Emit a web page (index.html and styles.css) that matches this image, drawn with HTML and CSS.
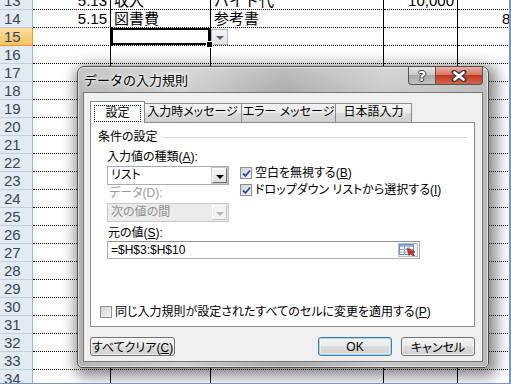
FILE: index.html
```html
<!DOCTYPE html>
<html lang="ja">
<head>
  <meta charset="UTF-8" />
  <title>データの入力規則</title>
  <link rel="stylesheet" href="styles.css">
</head>
<body>
  <div class="window">
    <div class="sheet">
      <div class="row"><div class="rh">13</div><div class="c a num">5.13</div><div class="c b">収入</div><div class="c cc">バイト代</div><div class="c d num">10,000</div><div class="c e"></div></div>
      <div class="row"><div class="rh">14</div><div class="c a num">5.15</div><div class="c b">図書費</div><div class="c cc">参考書</div><div class="c d"></div><div class="c e"><span class="cut">8,000</span></div></div>
      <div class="row"><div class="rh sel">15</div><div class="c a"></div><div class="c b active"></div><div class="c cc"><span class="dd-btn"></span></div><div class="c d"></div><div class="c e"></div></div>
      <div class="row"><div class="rh">16</div><div class="c a"></div><div class="c b"></div><div class="c cc"></div><div class="c d"></div><div class="c e"></div></div>
      <div class="row"><div class="rh">17</div><div class="c a"></div><div class="c b"></div><div class="c cc"></div><div class="c d"></div><div class="c e"></div></div>
      <div class="row"><div class="rh">18</div><div class="c a"></div><div class="c b"></div><div class="c cc"></div><div class="c d"></div><div class="c e"></div></div>
      <div class="row"><div class="rh">19</div><div class="c a"></div><div class="c b"></div><div class="c cc"></div><div class="c d"></div><div class="c e"></div></div>
      <div class="row"><div class="rh">20</div><div class="c a"></div><div class="c b"></div><div class="c cc"></div><div class="c d"></div><div class="c e"></div></div>
      <div class="row"><div class="rh">21</div><div class="c a"></div><div class="c b"></div><div class="c cc"></div><div class="c d"></div><div class="c e"></div></div>
      <div class="row"><div class="rh">22</div><div class="c a"></div><div class="c b"></div><div class="c cc"></div><div class="c d"></div><div class="c e"></div></div>
      <div class="row"><div class="rh">23</div><div class="c a"></div><div class="c b"></div><div class="c cc"></div><div class="c d"></div><div class="c e"></div></div>
      <div class="row"><div class="rh">24</div><div class="c a"></div><div class="c b"></div><div class="c cc"></div><div class="c d"></div><div class="c e"></div></div>
      <div class="row"><div class="rh">25</div><div class="c a"></div><div class="c b"></div><div class="c cc"></div><div class="c d"></div><div class="c e"></div></div>
      <div class="row"><div class="rh">26</div><div class="c a"></div><div class="c b"></div><div class="c cc"></div><div class="c d"></div><div class="c e"></div></div>
      <div class="row"><div class="rh">27</div><div class="c a"></div><div class="c b"></div><div class="c cc"></div><div class="c d"></div><div class="c e"></div></div>
      <div class="row"><div class="rh">28</div><div class="c a"></div><div class="c b"></div><div class="c cc"></div><div class="c d"></div><div class="c e"></div></div>
      <div class="row"><div class="rh">29</div><div class="c a"></div><div class="c b"></div><div class="c cc"></div><div class="c d"></div><div class="c e"></div></div>
      <div class="row"><div class="rh">30</div><div class="c a"></div><div class="c b"></div><div class="c cc"></div><div class="c d"></div><div class="c e"></div></div>
      <div class="row"><div class="rh">31</div><div class="c a"></div><div class="c b"></div><div class="c cc"></div><div class="c d"></div><div class="c e"></div></div>
      <div class="row"><div class="rh">32</div><div class="c a"></div><div class="c b"></div><div class="c cc"></div><div class="c d"></div><div class="c e"></div></div>
      <div class="row"><div class="rh">33</div><div class="c a"></div><div class="c b"></div><div class="c cc"></div><div class="c d"></div><div class="c e"></div></div>
      <div class="row"><div class="rh">34</div><div class="c a"></div><div class="c b"></div><div class="c cc"></div><div class="c d"></div><div class="c e"></div></div>
    </div>

    <div class="dialog">
      <div class="titlebar">
        <div class="title">データの入力規則</div>
        <div class="caption-btns">
          <div class="cap help">?</div>
          <div class="cap close">
            <svg width="16" height="12" viewBox="0 0 16 12"><path d="M3 2 L13 10 M13 2 L3 10" stroke="#3d3d3d" stroke-width="5" stroke-linecap="round"/><path d="M3.5 2.5 L12.5 9.5 M12.5 2.5 L3.5 9.5" stroke="#fff" stroke-width="2.6" stroke-linecap="round"/></svg>
          </div>
        </div>
      </div>

      <div class="client">
        <div class="tabs">
          <div class="tab active"><span class="focus">設定</span></div>
          <div class="tab t2">入力時メッセージ</div>
          <div class="tab t3">エラー メッセージ</div>
          <div class="tab t4">日本語入力</div>
        </div>
        <div class="panel">
          <div class="group-head"><span>条件の設定</span><i class="rule"></i></div>
          <div class="settings">
            <div class="lbl">入力値の種類(<u>A</u>):</div>
            <div class="combo-row">
              <div class="left-col">
                <div class="combo"><span class="val">リスト</span><span class="arrow"></span></div>
                <div class="lbl dim data-lbl">データ(D):</div>
                <div class="combo disabled"><span class="val">次の値の間</span><span class="arrow"></span></div>
              </div>
              <div class="right-col">
                <div class="check"><span class="box on"><svg width="9" height="9" viewBox="0 0 9 9"><path d="M1 4.5 L3.5 7 L8 1.5" stroke="#2b4a9a" stroke-width="1.8" fill="none"/></svg></span>空白を無視する(<u>B</u>)</div>
                <div class="check second"><span class="box on"><svg width="9" height="9" viewBox="0 0 9 9"><path d="M1 4.5 L3.5 7 L8 1.5" stroke="#2b4a9a" stroke-width="1.8" fill="none"/></svg></span>ドロップダウン リストから選択する(<u>I</u>)</div>
              </div>
            </div>
            <div class="lbl src-lbl">元の値(<u>S</u>):</div>
            <div class="src">
              <span class="val">=$H$3:$H$10</span>
              <span class="ref-btn">
                <svg width="18" height="12" viewBox="0 0 18 12">
                  <rect x="0.5" y="0.5" width="14" height="10" fill="#fff" stroke="#6f8fbf"/>
                  <rect x="1" y="1" width="13" height="2" fill="#9fb9dc"/>
                  <path d="M1 5.5 H14 M1 8 H14 M5.5 1 V10.5 M10 1 V10.5" stroke="#8aa6cf" stroke-width="1"/>
                  <path d="M8 4 L16 8 L13 9 L15.5 11.5 L14 12 L11.5 9.5 L10 11.5 Z" fill="#d8321e" stroke="#8e1a0c" stroke-width="0.6"/>
                </svg>
              </span>
            </div>
          </div>
          <div class="check apply"><span class="box"></span>同じ入力規則が設定されたすべてのセルに変更を適用する(<u>P</u>)</div>
        </div>
        <div class="buttons">
          <button class="btn clear">すべてクリア(<u>C</u>)</button>
          <button class="btn ok">OK</button>
          <button class="btn cancel">キャンセル</button>
        </div>
      </div>
    </div>
  </div>
</body>
</html>
```

FILE: styles.css
```css
* {
  box-sizing: border-box;
}
body {
  margin: 0;
  background: #fff;
}
.window {
  position: relative;
  width: 511px;
  height: 384px;
  overflow: hidden;
  border-right: 2px solid #7598cb;
  border-bottom: 1px solid #7598cb;
  font-family: "Liberation Sans", "Noto Sans CJK JP", sans-serif;
  font-feature-settings: "palt";
}

/* spreadsheet */
.sheet {
  margin-top: -8px;
}
.row {
  display: flex;
  height: 18px;
}
.rh {
  flex: none;
  width: 33px;
  background: #e4eaf2;
  border-right: 1px solid #9eb6ce;
  border-bottom: 1px solid #c3d0de;
  color: #3a4658;
  font-size: 15px;
  line-height: 17px;
  padding-left: 4px;
}
.rh.sel {
  background: linear-gradient(#fbdca0, #f3c462);
  border-right-color: #f29436;
  border-bottom-color: #f29436;
}
.c {
  flex: none;
  position: relative;
  border-right: 1px solid #000;
  border-bottom: 1px dotted #000;
  font-size: 15px;
  line-height: 17px;
  padding: 0 3px;
  white-space: nowrap;
  overflow: hidden;
  color: #000;
  font-feature-settings: normal;
}
.c.cc, .c.e {
  overflow: visible;
}
.a { width: 78px; }
.b { width: 100px; }
.cc { width: 173px; }
.d { width: 74px; }
.e { width: 120px; }
.num { text-align: right; }
.cut { padding-left: 41px; }
.b.active {
  box-shadow: inset 0 0 0 2px #000, inset 0 0 0 3px #fff;
  overflow: visible;
}
.b.active::after {
  content: "";
  position: absolute;
  right: -3px;
  bottom: -3px;
  width: 5px;
  height: 5px;
  background: #000;
  border: 1px solid #fff;
  z-index: 2;
}
.dd-btn {
  position: absolute;
  left: 0;
  top: 1px;
  width: 17px;
  height: 16px;
  background: linear-gradient(#f4f5f7, #dfe3e8);
  border: 1px solid #b1b8c2;
}
.dd-btn::after {
  content: "";
  position: absolute;
  left: 4px;
  top: 6px;
  border-left: 4px solid transparent;
  border-right: 4px solid transparent;
  border-top: 4px solid #5a6270;
}

/* dialog */
.dialog {
  position: absolute;
  left: 77px;
  top: 66px;
  width: 412px;
  height: 302px;
  border: 1px solid #4f4f4f;
  border-radius: 7px 7px 5px 5px;
  padding: 0 5px 5px;
  display: flex;
  flex-direction: column;
  background:
    linear-gradient(rgba(255,255,255,0.25), rgba(255,255,255,0) 30px),
    linear-gradient(90deg, #b4b4b4, #cfcfcf 25%, #a9a9a9 50%, #c9c9c9 75%, #b9b9b9);
  box-shadow: inset 0 0 0 1px rgba(255,255,255,0.55), 3px 4px 14px 5px rgba(0,0,0,0.45);
  font-size: 12px;
  color: #000;
}
.titlebar {
  flex: none;
  height: 25px;
  display: flex;
  align-items: flex-start;
}
.title {
  flex: 1;
  padding: 7px 0 0 1px;
  line-height: 14px;
  font-size: 13px;
  font-feature-settings: normal;
  text-shadow: 0 0 6px #fff, 0 0 3px #fff;
}
.caption-btns {
  display: flex;
}
.cap {
  height: 18px;
  border: 1px solid #555;
  border-top: none;
  display: flex;
  align-items: center;
  justify-content: center;
}
.help {
  width: 27px;
  border-right: none;
  border-radius: 0 0 0 4px;
  background: linear-gradient(#e6e6e6, #cbcbcb 45%, #a8a8a8 50%, #c2c2c2);
  color: #fff;
  font: bold 14px "DejaVu Sans", sans-serif;
  text-shadow: -1px 0 #3a3a3a, 1px 0 #3a3a3a, 0 -1px #3a3a3a, 0 1px #3a3a3a;
}
.close {
  width: 48px;
  border-radius: 0 0 4px 0;
  background: linear-gradient(#eab0a3, #da7664 45%, #c23a24 50%, #d4634d);
}
.client {
  flex: 1;
  background: #f0f0f0;
  border: 1px solid #787878;
  padding: 8px 7px 0 6px;
  display: flex;
  flex-direction: column;
}

/* tabs */
.tabs {
  display: flex;
  align-items: flex-end;
  height: 21px;
  padding-left: 2px;
}
.tab {
  height: 19px;
  border: 1px solid #898c95;
  border-bottom: none;
  background: linear-gradient(#f3f3f3, #ebebeb 50%, #dddddd 50%, #d0d0d0);
  text-align: center;
  line-height: 17px;
  white-space: nowrap;
}
.tab.active {
  position: relative;
  z-index: 1;
  width: 55px;
  height: 22px;
  margin: 0 -2px -1px;
  background: #fff;
  padding-top: 3px;
}
.focus {
  display: inline-block;
  outline: 1px dotted #000;
  width: 45px;
  height: 15px;
  line-height: 14px;
}
.t2 { width: 99px; }
.t3 { width: 95px; margin-left: -1px; }
.t4 { width: 77px; margin-left: -1px; }

.panel {
  height: 205px;
  border: 1px solid #898c95;
  background: #fff;
  display: flex;
  flex-direction: column;
}
.group-head {
  display: flex;
  align-items: center;
  gap: 4px;
  margin: 7px 7px 0 7px;
  line-height: 14px;
}
.rule {
  flex: 1;
  height: 1px;
  background: #d5dfe5;
}
.settings {
  padding-left: 16px;
}
.lbl {
  line-height: 14px;
  margin-top: 6px;
}
.dim {
  color: #9a9a9a;
}
.combo-row {
  display: flex;
  margin-top: 2px;
}
.left-col {
  width: 122px;
}
.right-col {
  margin-left: 11px;
}
.combo {
  display: flex;
  height: 19px;
  border: 1px solid #a5acb5;
  background: #fff;
}
.combo .val {
  flex: 1;
  padding-left: 3px;
  line-height: 17px;
}
.combo .arrow {
  position: relative;
  width: 15px;
  margin: 1px;
  background: linear-gradient(#f6f6f6, #dedede);
  border: 1px solid;
  border-color: #fff #6f6f6f #6f6f6f #fff;
  box-shadow: 0 0 0 1px #c9c9c9;
}
.combo .arrow::after {
  content: "";
  position: absolute;
  left: 3px;
  top: 6px;
  border-left: 4px solid transparent;
  border-right: 4px solid transparent;
  border-top: 4px solid #000;
}
.combo.disabled {
  background: #ececec;
  border-color: #c6c9cf;
  color: #8e8e8e;
}
.combo.disabled .arrow {
  background: #f2f2f2;
  border-color: #fff #c4c4c4 #c4c4c4 #fff;
  box-shadow: none;
}
.combo.disabled .arrow::after {
  border-top-color: #b5b5b5;
}
.data-lbl {
  margin-top: 1px;
  padding-left: 2px;
}
.combo.disabled {
  margin-top: 3px;
}
.check {
  display: flex;
  align-items: center;
  line-height: 14px;
  white-space: nowrap;
}
.check.second {
  margin-top: 3px;
}
.box {
  flex: none;
  width: 12px;
  height: 12px;
  margin-right: 3px;
  border: 1px solid #8e8f8f;
  background: linear-gradient(135deg, #cdd1d6, #f7f7f7);
  display: flex;
  align-items: center;
  justify-content: center;
}
.src-lbl {
  margin-top: 4px;
  padding-left: 1px;
}
.src {
  display: flex;
  align-items: center;
  width: 313px;
  height: 18px;
  margin-top: 1px;
  border: 1px solid #abadb3;
  border-top-color: #8d9097;
}
.src .val {
  flex: 1;
  padding-left: 3px;
}
.ref-btn {
  width: 20px;
  height: 14px;
  margin-right: 1px;
  border: 1px solid #b7bcc4;
  background: #eef1f5;
  display: flex;
  align-items: center;
  justify-content: center;
}
.check.apply {
  margin-top: auto;
  margin-bottom: 7px;
  padding-left: 9px;
}

/* buttons */
.buttons {
  display: flex;
  margin-top: 10px;
}
.btn {
  height: 19px;
  padding: 0;
  white-space: nowrap;
  font: 12px "Liberation Sans", "Noto Sans CJK JP", sans-serif;
  font-feature-settings: "palt";
  color: #000;
  border: 1px solid #707070;
  border-radius: 3px;
  background: linear-gradient(#f2f2f2, #ebebeb 50%, #dddddd 50%, #cfcfcf);
  box-shadow: inset 0 0 0 1px rgba(255,255,255,0.7);
}
.clear {
  width: 85px;
}
.ok {
  width: 74px;
  margin-left: auto;
  border-color: #3c7fb1;
  box-shadow: inset 0 0 0 1px #9fd6f2, inset 0 0 0 2px rgba(255,255,255,0.5);
}
.cancel {
  width: 74px;
  margin-left: 9px;
}
```
